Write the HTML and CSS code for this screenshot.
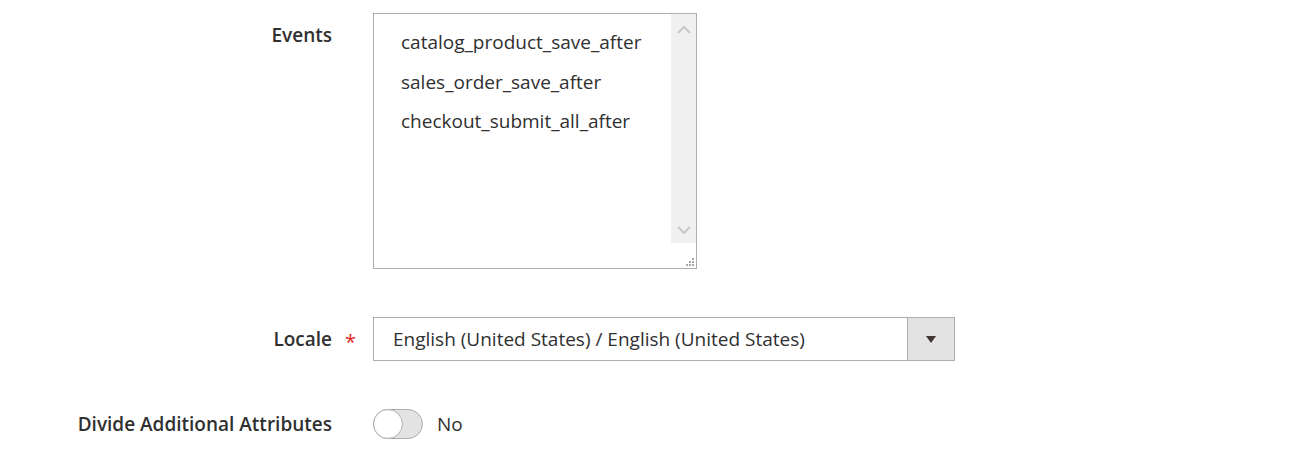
FILE: index.html
```html
<!DOCTYPE html>
<html lang="en">
<head>
    <meta charset="UTF-8">
    <title>Webhook settings</title>
    <link rel="stylesheet" href="styles.css">
</head>
<body>

    <div class="form">

        <div class="field">
            <label class="label label-top">Events</label>
            <span class="req"></span>
            <div class="multiselect">
                <div class="options">
                    <p>catalog_product_save_after</p>
                    <p>sales_order_save_after</p>
                    <p>checkout_submit_all_after</p>
                </div>
                <div class="scrollbar">
                    <svg class="arrow" width="16" height="10" viewBox="0 0 16 10"><path d="M2 8 L8 2 L14 8" fill="none" stroke="#c9c9c9" stroke-width="2"/></svg>
                    <svg class="arrow" width="16" height="10" viewBox="0 0 16 10"><path d="M2 2 L8 8 L14 2" fill="none" stroke="#c9c9c9" stroke-width="2"/></svg>
                </div>
                <svg class="resizer" width="10" height="10" viewBox="0 0 10 10">
                    <rect x="7" y="1" width="2" height="2" fill="#a8a8a8"/>
                    <rect x="4" y="4" width="2" height="2" fill="#a8a8a8"/>
                    <rect x="7" y="4" width="2" height="2" fill="#a8a8a8"/>
                    <rect x="1" y="7" width="2" height="2" fill="#a8a8a8"/>
                    <rect x="4" y="7" width="2" height="2" fill="#a8a8a8"/>
                    <rect x="7" y="7" width="2" height="2" fill="#a8a8a8"/>
                </svg>
            </div>
        </div>

        <div class="field field-locale">
            <label class="label">Locale</label>
            <span class="req">*</span>
            <div class="select">
                <span class="select-text">English (United States) / English (United States)</span>
                <span class="select-btn"><span class="caret"></span></span>
            </div>
        </div>

        <div class="field field-toggle">
            <label class="label">Divide Additional Attributes</label>
            <span class="req"></span>
            <div class="toggle-wrap">
                <span class="toggle"><span class="knob"></span></span>
                <span class="toggle-text">No</span>
            </div>
        </div>

    </div>

</body>
</html>
```

FILE: styles.css
```css
body {
    margin: 0px;
    background-color: #ffffff;
    color: #303030;
    font-family: "Open Sans", "Liberation Sans", sans-serif;
}

.form {
    padding-top: 13px;
}

.field {
    display: grid;
    grid-template-columns: 332px 41px auto;
    align-items: center;
}

.label {
    text-align: right;
    font-weight: 600;
    font-size: 19px;
    line-height: 26px;
}

.label-top {
    align-self: start;
    padding-top: 9px;
}

.req {
    color: #e22626;
    font-size: 20px;
    padding-left: 13px;
    padding-top: 4px;
}

.multiselect {
    position: relative;
    display: flex;
    width: 322px;
    height: 254px;
    border: 1px solid #adadad;
}

.options {
    flex: 1;
    padding-top: 15px;
    padding-left: 27px;
    font-size: 19px;
}

.options p {
    margin: 0px;
    height: 39.5px;
    line-height: 26px;
}

.scrollbar {
    width: 25px;
    height: 229px;
    background-color: #f0f0f0;
    display: flex;
    flex-direction: column;
    justify-content: space-between;
    align-items: center;
    padding: 11px 0px 8px 0px;
    box-sizing: border-box;
}

.arrow {
    display: block;
}

.resizer {
    position: absolute;
    right: 1px;
    bottom: 1px;
}

.field-locale {
    margin-top: 48px;
}

.select {
    display: flex;
    width: 580px;
    height: 42px;
    border: 1px solid #adadad;
}

.select-text {
    flex: 1;
    padding-left: 19px;
    font-size: 19px;
    line-height: 42px;
}

.select-btn {
    width: 46px;
    background-color: #e3e3e3;
    border-left: 1px solid #adadad;
    display: flex;
    align-items: center;
    justify-content: center;
}

.caret {
    width: 0px;
    height: 0px;
    border-left: 5px solid transparent;
    border-right: 5px solid transparent;
    border-top: 7px solid #41362f;
}

.field-toggle {
    margin-top: 48px;
}

.toggle-wrap {
    display: flex;
    align-items: center;
}

.toggle {
    position: relative;
    display: block;
    width: 48px;
    height: 28px;
    border: 1px solid #adadad;
    border-radius: 15px;
    background-color: #e3e3e3;
}

.knob {
    position: absolute;
    left: -1px;
    top: -1px;
    width: 28px;
    height: 28px;
    border: 1px solid #adadad;
    border-radius: 50%;
    background-color: #ffffff;
}

.toggle-text {
    margin-left: 14px;
    font-size: 19px;
}
```
